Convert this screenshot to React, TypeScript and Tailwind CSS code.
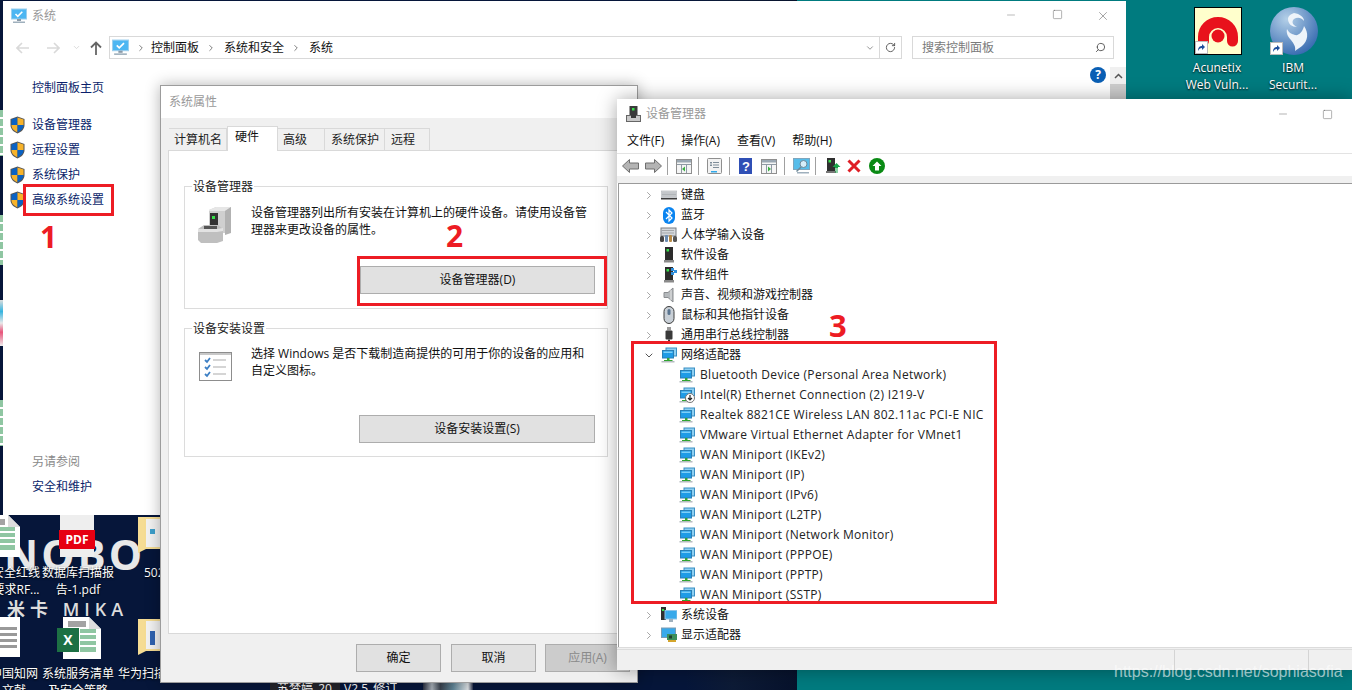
import type { ReactNode } from "react";
import { ChevronDown, ChevronRight, Minus, RotateCw, Search, Square, X } from "lucide-react";

const FONT = "font-['Open_Sans','Noto_Sans_CJK_SC',sans-serif]";

function Shield() {
  return (
    <svg width="15" height="18" viewBox="0 0 15 18" className="shrink-0">
      <path d="M7.5 .5 14.5 3v6c0 4-3 7-7 8.500C3.500 16 .5 13 .5 9V3z" fill="#555" />
      <path d="M7.500 1.500V9H1.500V3.600z" fill="#0a62c4" />
      <path d="M7.500 1.500V9h6V3.600z" fill="#f7b32b" />
      <path d="M1.500 9h6v7.300C4 15 1.500 12.500 1.500 9z" fill="#f7b32b" />
      <path d="M13.500 9h-6v7.300c3.500-1.300 6-3.800 6-7.300z" fill="#0a62c4" />
    </svg>
  );
}

function MonitorIcon({ size = 16 }: { size?: number }) {
  return (
    <svg width={size} height={size} viewBox="0 0 16 16" className="shrink-0">
      <rect x=".5" y="1" width="15" height="10" fill="#4db6f2" stroke="#9ccfee" />
      <path d="m4.500 6 2.300 2.300 4.500-4.500" fill="none" stroke="#fff" strokeWidth="1.600" />
      <rect x="6" y="11" width="4" height="2" fill="#8a9aa8" />
      <rect x="2" y="13.500" width="12" height="1.500" fill="#9fb0bd" />
    </svg>
  );
}

function NetIcon({ badge = false }: { badge?: boolean }) {
  return (
    <svg width="16" height="16" viewBox="0 0 16 16" className="shrink-0">
      <rect x="5" y="1" width="10.500" height="8" fill="#8ed0f2" stroke="#3a8fc4" />
      <rect x="1.500" y="3.500" width="11" height="7.500" fill="#1f9be6" stroke="#2a7fb5" />
      <rect x="2.500" y="4.500" width="9" height="1.500" fill="#7fd0f8" />
      <rect x="6" y="11" width="2.500" height="2" fill="#39a63a" />
      <rect x="3" y="13" width="8.500" height="1" fill="#2fa52f" />
      <rect x=".5" y="14" width="13" height="1.500" fill="#b5bcc0" />
      {badge ? (
        <>
          <circle cx="11" cy="11" r="4.500" fill="#fff" stroke="#777" />
          <path d="M11 8v5m-2-2 2 2 2-2" fill="none" stroke="#222" strokeWidth="1.200" />
        </>
      ) : null}
    </svg>
  );
}

function KeyboardIcon() {
  return (
    <svg width="16" height="16" viewBox="0 0 16 16" className="shrink-0">
      <rect x="0" y="4" width="16" height="7" fill="#d6d9dc" stroke="#a8acb0" strokeWidth=".6" />
      <path d="M1.500 6h13M1.500 7.500h13M1.500 9h13" stroke="#8c9094" strokeDasharray="1 1" />
      <rect x="0" y="11" width="16" height="1.500" fill="#3c3c3c" />
    </svg>
  );
}

function BluetoothIcon() {
  return (
    <svg width="16" height="17" viewBox="0 0 16 17" className="shrink-0">
      <rect x="2" y="0" width="12" height="17" rx="6" fill="#0a84f0" />
      <path d="m5 5 6 6-3 3V3l3 3-6 6" fill="none" stroke="#fff" strokeWidth="1.200" />
    </svg>
  );
}

function HidIcon() {
  return (
    <svg width="17" height="16" viewBox="0 0 17 16" className="shrink-0">
      <rect x="1" y="1" width="15" height="8" fill="#d4d8dc" stroke="#7b7f84" />
      <path d="M2.500 3.500h12M2.500 6h12" stroke="#777" strokeDasharray="1 1" />
      <rect x="0" y="9" width="4" height="6" rx="1.500" fill="#444" />
      <rect x="5" y="8" width="3" height="7" rx="1" fill="#6a8bb0" />
      <rect x="9" y="8" width="3" height="7" rx="1" fill="#b88a45" />
      <rect x="13" y="9" width="4" height="6" rx="1.500" fill="#555" />
    </svg>
  );
}

function TowerIcon({ extra = false }: { extra?: boolean }) {
  return (
    <svg width="16" height="16" viewBox="0 0 16 16" className="shrink-0">
      <rect x="4" y="0" width="8" height="13" fill="#2c2c2c" />
      <rect x="5.500" y="2" width="2.500" height="2.500" fill="#37e04a" />
      <rect x="3" y="13" width="10" height="2.500" fill="#8a8a8a" />
      {extra ? (
        <>
          <rect x="10" y="1" width="3" height="3" fill="#2f8fdc" />
          <rect x="13" y="3" width="3" height="3" fill="#2f8fdc" />
          <rect x="10" y="5" width="3" height="3" fill="#2f8fdc" />
        </>
      ) : null}
    </svg>
  );
}

function SoundIcon() {
  return (
    <svg width="16" height="16" viewBox="0 0 16 16" className="shrink-0">
      <path d="M3 5.500h4L12 1v14L7 10.500H3z" fill="#b5b9bc" stroke="#8a8d90" />
      <path d="M10 3v10" stroke="#e5e5e5" />
    </svg>
  );
}

function MouseIcon() {
  return (
    <svg width="16" height="18" viewBox="0 0 16 18" className="shrink-0">
      <rect x="3" y=".5" width="10" height="17" rx="5" fill="#c8cfd6" stroke="#3c3c3c" />
      <rect x="6.500" y="3" width="3" height="6" rx="1.500" fill="#5a7590" />
    </svg>
  );
}

function UsbIcon() {
  return (
    <svg width="16" height="16" viewBox="0 0 16 16" className="shrink-0">
      <rect x="6" y="0" width="4" height="3.500" fill="#9a9a9a" />
      <rect x="4.500" y="3.500" width="7" height="9" rx="1" fill="#3a3a3a" />
      <rect x="7" y="12.500" width="2" height="3.500" fill="#3a3a3a" />
    </svg>
  );
}

function SystemDeviceIcon() {
  return (
    <svg width="16" height="16" viewBox="0 0 16 16" className="shrink-0">
      <rect x="0" y="0" width="5" height="13" fill="#2f2f2f" />
      <rect x="1" y="2" width="2" height="2" fill="#37e04a" />
      <rect x="4" y="3.500" width="12" height="8.500" fill="#38a9ea" stroke="#8cc4e8" />
      <rect x="8" y="12" width="4" height="3" fill="#9fb0bd" />
    </svg>
  );
}

function DisplayIcon() {
  return (
    <svg width="16" height="16" viewBox="0 0 16 16" className="shrink-0">
      <rect x=".5" y="1" width="14" height="9.500" fill="#38a9ea" stroke="#7a9cb4" />
      <rect x="6" y="7" width="10" height="6" fill="#3c8f5a" />
      <rect x="8" y="8.500" width="3" height="3" fill="#1f3f2c" />
      <rect x="7" y="13" width="8" height="2" fill="#d4a52c" />
    </svg>
  );
}

function DeviceManagerIcon() {
  return (
    <svg width="15" height="16" viewBox="0 0 15 16" className="shrink-0">
      <rect x="3.500" y="0" width="8" height="10" fill="#3a3a3a" />
      <rect x="6" y="2" width="2.500" height="2.500" fill="#37e04a" />
      <rect x=".5" y="9.500" width="14" height="6" fill="#c9c9c9" stroke="#666" />
      <rect x="5" y="9" width="5" height="3" fill="#3a3a3a" />
    </svg>
  );
}

function ArrowButton({ flip = false }: { flip?: boolean }) {
  return (
    <svg width="17" height="14" viewBox="0 0 17 14" className={flip ? "shrink-0 -scale-x-100" : "shrink-0"}>
      <path d="M.5 7 7.500 .5V4h9v6h-9v3.500z" fill="#b4b4b4" stroke="#6f6f6f" />
    </svg>
  );
}

function ConsolePaneIcon({ flip = false }: { flip?: boolean }) {
  return (
    <svg width="16" height="15" viewBox="0 0 16 15" className="shrink-0">
      <rect x=".5" y=".5" width="15" height="14" fill="#f5f5f5" stroke="#8f8f8f" />
      <rect x="1" y="1" width="14" height="2.500" fill="#9aa7b2" />
      <path d="M1 5.500h14M5.500 5.500V14M10.500 5.500V14" stroke="#8f9aa4" />
      <path d={flip ? "M7 7.500v5l3-2.500z" : "M9 7.500v5L6 10z"} fill="#3cb043" />
    </svg>
  );
}

function SheetIcon() {
  return (
    <svg width="15" height="16" viewBox="0 0 15 16" className="shrink-0">
      <rect x=".5" y=".5" width="14" height="15" rx="1" fill="#f2f2f2" stroke="#8f8f8f" />
      <path d="M6 4.500h6M6 7h6M6 9.500h6" stroke="#7f8d99" />
      <rect x="3" y="4" width="2" height="1.500" fill="#7f8d99" />
      <rect x="3" y="6.500" width="2" height="1.500" fill="#7f8d99" />
      <rect x="4" y="13" width="6" height="1.500" fill="#31a8e8" />
    </svg>
  );
}

function HelpSquareIcon() {
  return (
    <svg width="13" height="16" viewBox="0 0 13 16" className="shrink-0">
      <rect width="13" height="16" fill="#2f4fb5" />
      <text x="3" y="13" fontSize="13" fontWeight="700" fill="#fff" fontFamily="Liberation Sans">?</text>
    </svg>
  );
}

function ScanIcon() {
  return (
    <svg width="17" height="16" viewBox="0 0 17 16" className="shrink-0">
      <rect x=".5" y=".5" width="16" height="11" fill="#57bdea" stroke="#7fa6bd" />
      <circle cx="10.500" cy="6" r="3.500" fill="#d6eefa" stroke="#6d8797" />
      <path d="M8 9 3.500 13.500" stroke="#6d8797" strokeWidth="1.500" />
      <rect x="4" y="14" width="12" height="1.500" fill="#9fb0bd" />
    </svg>
  );
}

function InstallIcon() {
  return (
    <svg width="16" height="16" viewBox="0 0 16 16" className="shrink-0">
      <rect x="2" y="0" width="8" height="13" fill="#2f2f2f" />
      <rect x="3.500" y="2" width="2.500" height="2.500" fill="#37e04a" />
      <rect x="1" y="13" width="10" height="2" fill="#777" />
      <path d="m11.500 5 4 4h-2.500v1.500h-3V9H7.500z" fill="#1aa64a" />
      <path d="M10 12h3M10 14h3" stroke="#1aa64a" strokeWidth="1.200" />
    </svg>
  );
}

function RedX() {
  return (
    <svg width="14" height="14" viewBox="0 0 14 14" className="shrink-0">
      <path d="m1.500 1.500 11 11m0-11-11 11" stroke="#df1f26" strokeWidth="3" />
    </svg>
  );
}

function UpCircle() {
  return (
    <svg width="16" height="16" viewBox="0 0 16 16" className="shrink-0">
      <circle cx="8" cy="8" r="8" fill="#0a8a14" />
      <path d="M8 3.500 12.500 8H10v4.500H6V8H3.500z" fill="#fff" />
    </svg>
  );
}

function ToolbarSep({ className }: { className: string }) {
  return <div className={`h-[18px] w-px shrink-0 bg-[#a0a0a0] ${className}`} />;
}

const TOP_ROWS: [string, ReactNode][] = [
  ["键盘", <KeyboardIcon />],
  ["蓝牙", <BluetoothIcon />],
  ["人体学输入设备", <HidIcon />],
  ["软件设备", <TowerIcon />],
  ["软件组件", <TowerIcon extra />],
  ["声音、视频和游戏控制器", <SoundIcon />],
  ["鼠标和其他指针设备", <MouseIcon />],
  ["通用串行总线控制器", <UsbIcon />],
];

const ADAPTERS = [
  "Bluetooth Device (Personal Area Network)",
  "Intel(R) Ethernet Connection (2) I219-V",
  "Realtek 8821CE Wireless LAN 802.11ac PCI-E NIC",
  "VMware Virtual Ethernet Adapter for VMnet1",
  "WAN Miniport (IKEv2)",
  "WAN Miniport (IP)",
  "WAN Miniport (IPv6)",
  "WAN Miniport (L2TP)",
  "WAN Miniport (Network Monitor)",
  "WAN Miniport (PPPOE)",
  "WAN Miniport (PPTP)",
  "WAN Miniport (SSTP)",
];

function TreeRow({ label, icon, open = false }: { label: string; icon: ReactNode; open?: boolean }) {
  return (
    <div className="flex h-5 items-center pl-[24px]">
      <div className="flex w-[12px] justify-center">
        {open ? (
          <ChevronDown size={13} strokeWidth={2} className="text-[#555]" />
        ) : (
          <ChevronRight size={13} strokeWidth={2} className="text-[#a6a6a6]" />
        )}
      </div>
      <div className="ml-[5px] flex w-[17px] justify-center">{icon}</div>
      <span className="ml-[4px] whitespace-nowrap text-[#111]">{label}</span>
    </div>
  );
}

function DeviceManagerWindow() {
  return (
    <div className="absolute left-[617px] top-[99px] flex h-[571px] w-[735px] flex-col bg-white shadow-[0_0_18px_rgba(0,0,0,0.35)]">
      <div className="flex h-[30px] shrink-0 items-center whitespace-nowrap pl-[9px] text-[#999]">
        <DeviceManagerIcon />
        <span className="ml-[5px] w-[631px]">设备管理器</span>
        <Minus size={12} strokeWidth={1} className="shrink-0 text-[#666]" />
        <Square size={11} strokeWidth={1} className="ml-[33px] shrink-0 text-[#555]" />
      </div>
      <div className="flex h-[24px] shrink-0 items-center gap-[17px] whitespace-nowrap pl-[10px] text-[#111]">
        <span>文件(F)</span>
        <span>操作(A)</span>
        <span>查看(V)</span>
        <span>帮助(H)</span>
      </div>
      <div className="flex h-[23px] shrink-0 items-center border-t border-[#e3e3e3] pl-[5px] pt-[2px]">
        <ArrowButton />
        <div className="ml-[6px]">
          <ArrowButton flip />
        </div>
        <ToolbarSep className="ml-[5px] mr-[8px]" />
        <ConsolePaneIcon />
        <ToolbarSep className="ml-[6px] mr-[8px]" />
        <SheetIcon />
        <ToolbarSep className="ml-[7px] mr-[9px]" />
        <HelpSquareIcon />
        <div className="ml-[9px]">
          <ConsolePaneIcon flip />
        </div>
        <ToolbarSep className="ml-[7px] mr-[8px]" />
        <ScanIcon />
        <ToolbarSep className="ml-[5px] mr-[9px]" />
        <InstallIcon />
        <div className="ml-[6px]">
          <RedX />
        </div>
        <div className="ml-[8px]">
          <UpCircle />
        </div>
      </div>
      <div className="h-[7px] shrink-0 bg-[#f0f0f0]" />
      <div className="ml-px flex-1 overflow-hidden border-l border-t border-[#9a9a9a] pt-[1px]">
        {TOP_ROWS.map(([label, icon]) => (
          <TreeRow key={label} label={label} icon={icon} />
        ))}
        <TreeRow label="网络适配器" icon={<NetIcon />} open />
        {ADAPTERS.map((name, i) => (
          <div key={name} className="flex h-5 items-center whitespace-nowrap pl-[60px] tracking-[0.3px] text-[#222]">
            <NetIcon badge={i === 1} />
            <span className="ml-[5px]">{name}</span>
          </div>
        ))}
        <TreeRow label="系统设备" icon={<SystemDeviceIcon />} />
        <TreeRow label="显示适配器" icon={<DisplayIcon />} />
      </div>
      <div className="flex h-[23px] shrink-0 border-t-[3px] border-double border-[#dcdcdc] bg-[#f0f0f0]">
        <div className="ml-[557px] h-full w-px bg-[#d4d4d4]" />
        <div className="ml-[133px] h-full w-px bg-[#d4d4d4]" />
      </div>
    </div>
  );
}

function GrayButton({ children, className }: { children: ReactNode; className: string }) {
  return (
    <div className={`flex h-[28px] items-center justify-center border border-[#adadad] bg-[#e1e1e1] text-[#111] ${className}`}>
      {children}
    </div>
  );
}

function GroupBox({ title, className, children }: { title: string; className: string; children: ReactNode }) {
  return (
    <div className={`relative border border-[#dcdcdc] ${className}`}>
      <span className="absolute -top-[8px] left-[7px] bg-white px-[1px] leading-4 text-[#222]">{title}</span>
      {children}
    </div>
  );
}

function SystemPropertiesDialog() {
  const tabs = [
    ["计算机名", "w-[58px] pl-[5px]"],
    ["硬件", "w-[51px] pl-[7px]"],
    ["高级", "w-[47px] pl-[5px]"],
    ["系统保护", "w-[60px] pl-[6px]"],
    ["远程", "w-[45px] pl-[6px]"],
  ];
  return (
    <div className="absolute left-[160px] top-[85px] flex h-[598px] w-[478px] flex-col border border-[#9c9c9c] bg-[#f0f0f0] shadow-[0_0_14px_rgba(0,0,0,0.3)]">
      <div className="flex h-[32px] shrink-0 items-center bg-white pl-[8px] text-[#999]">系统属性</div>
      <div className="flex h-[32px] shrink-0 items-end pl-[8px]">
        {tabs.map(([label, width]) =>
          label === "硬件" ? (
            <div
              key={label}
              className={`relative z-10 -mb-px flex h-[25px] items-start border-x border-t border-[#d9d9d9] bg-white pt-[2px] text-[#111] ${width}`}
            >
              {label}
            </div>
          ) : (
            <div
              key={label}
              className={`flex h-[22px] items-center border-r border-t border-[#d9d9d9] bg-[#f0f0f0] pt-[1px] text-[#222] ${width}`}
            >
              {label}
            </div>
          ),
        )}
      </div>
      <div className="ml-[7px] mr-[6px] h-[484px] shrink-0 border border-[#d9d9d9] bg-white px-[15px] pt-[35px]">
        <GroupBox title="设备管理器" className="h-[123px] w-[424px]">
          <div className="flex pl-[13px] pt-[20px]">
            <svg width="35" height="36" viewBox="0 0 35 36" className="shrink-0">
              <path d="M11 3 18 0h15v26H19l-8-4z" fill="#cfcfcf" />
              <path d="M11 3 18 0h15l-6 4H11z" fill="#e6e6e6" />
              <path d="M27 4 33 0v26l-6 2z" fill="#b2b2b2" />
              <path d="M12 6h8v13h-8z" fill="#333" />
              <rect x="14" y="9" width="3" height="3" fill="#37e04a" />
              <path d="M0 22l6-4h14l5 4v12l-6 2H3l-3-3z" fill="#bfbfbf" />
              <path d="M0 22h19l6-1v3l-6 1H0z" fill="#e2e2e2" />
              <path d="M6 19h13v3H6z" fill="#555" />
            </svg>
            <p className="-mt-[3px] ml-[18px] w-[345px] leading-[17px] text-[#111]">
              设备管理器列出所有安装在计算机上的硬件设备。请使用设备管理器来更改设备的属性。
            </p>
          </div>
          <div className="flex justify-end pr-[12px] pt-[23px]">
            <GrayButton className="w-[235px]">设备管理器(D)</GrayButton>
          </div>
        </GroupBox>
        <GroupBox title="设备安装设置" className="mt-[19px] h-[129px] w-[424px]">
          <div className="flex pl-[14px] pt-[23px]">
            <svg width="33" height="29" viewBox="0 0 33 29" className="shrink-0">
              <rect x=".5" y=".5" width="32" height="28" fill="#fff" stroke="#8d8d8d" />
              <rect x="1" y="1" width="31" height="2" fill="#c8c8c8" />
              <path d="M14 8h13M14 15h13M14 22h13" stroke="#c8c8c8" strokeWidth="1.500" />
              <path d="m6 8 2 2 3-4M6 15l2 2 3-4M6 22l2 2 3-4" fill="none" stroke="#3d7fc4" strokeWidth="1.800" />
            </svg>
            <p className="-mt-[7px] ml-[19px] h-[34px] w-[345px] leading-[17px] text-[#111]">
              选择 Windows 是否下载制造商提供的可用于你的设备的应用和自定义图标。
            </p>
          </div>
          <div className="flex justify-end pr-[12px] pt-[34px]">
            <GrayButton className="w-[236px]">设备安装设置(S)</GrayButton>
          </div>
        </GroupBox>
      </div>
      <div className="flex gap-[10px] pl-[195px] pt-[10px]">
        <GrayButton className="w-[85px]">确定</GrayButton>
        <GrayButton className="w-[85px]">取消</GrayButton>
        <GrayButton className="-ml-px w-[85px] !bg-[#cccccc] !text-[#8a8a8a]">应用(A)</GrayButton>
      </div>
    </div>
  );
}

function NavLink({ label }: { label: string }) {
  return (
    <div className="flex h-[25px] items-center pl-[7px]">
      <Shield />
      <span className="ml-[7px] text-[#0b1f6b]">{label}</span>
    </div>
  );
}

function SystemWindow() {
  return (
    <div className="absolute left-[3px] top-[1px] flex h-[514px] w-[1123px] flex-col bg-white">
      <div className="flex h-[30px] shrink-0 items-center pl-[8px] text-[#999]">
        <MonitorIcon />
        <span className="ml-[5px]">系统</span>
        <div className="ml-auto flex">
          <div className="flex w-[46px] justify-center"><Minus size={12} strokeWidth={1} className="text-[#777]" /></div>
          <div className="flex w-[46px] justify-center"><Square size={11} strokeWidth={1} className="text-[#555]" /></div>
          <div className="flex w-[46px] justify-center"><X size={14} strokeWidth={1} className="text-[#666]" /></div>
        </div>
      </div>
      <div className="mt-[5px] flex h-[23px] shrink-0 items-center">
        <svg width="14" height="12" viewBox="0 0 14 12" className="ml-[13px] shrink-0">
          <path d="M6 1 1 6l5 5M1 6h12" fill="none" stroke="#d9d9d9" strokeWidth="1.600" />
        </svg>
        <svg width="14" height="12" viewBox="0 0 14 12" className="ml-[16px] -scale-x-100 shrink-0">
          <path d="M6 1 1 6l5 5M1 6h12" fill="none" stroke="#d9d9d9" strokeWidth="1.600" />
        </svg>
        <ChevronDown size={9} className="ml-[12px] text-[#d0d0d0]" />
        <svg width="12" height="14" viewBox="0 0 12 14" className="ml-[9px] shrink-0">
          <path d="M1 6.500 6 1.500l5 5M6 1.500V14" fill="none" stroke="#666" strokeWidth="1.800" />
        </svg>
        <div className="ml-[7px] flex h-[23px] w-[771px] items-center border border-[#d9d9d9] pl-[2px] text-[#111]">
          <MonitorIcon size={17} />
          <ChevronRight size={10} strokeWidth={2} className="ml-[7px] text-[#666]" />
          <span className="ml-[5px]">控制面板</span>
          <ChevronRight size={10} strokeWidth={2} className="ml-[7px] text-[#666]" />
          <span className="ml-[8px]">系统和安全</span>
          <ChevronRight size={10} strokeWidth={2} className="ml-[7px] text-[#666]" />
          <span className="ml-[8px]">系统</span>
          <ChevronDown size={10} strokeWidth={1.500} className="ml-auto mr-[4px] text-[#555]" />
        </div>
        <div className="flex h-[23px] w-[22px] items-center justify-center border-y border-r border-[#d9d9d9]">
          <RotateCw size={11} className="text-[#555]" />
        </div>
        <div className="ml-[10px] flex h-[23px] w-[202px] items-center justify-between border border-[#d9d9d9] pl-[9px] pr-[7px] text-[#7a7a7a]">
          <span>搜索控制面板</span>
          <Search size={11} strokeWidth={2} className="-scale-x-100 text-[#555]" />
        </div>
      </div>
      <div className="flex min-h-0 flex-1">
        <div className="w-[157px] pt-[21px]">
          <div className="pl-[29px] leading-4 text-[#0b1f6b]">控制面板主页</div>
          <div className="mt-[16px]">
            {["设备管理器", "远程设置", "系统保护", "高级系统设置"].map((label) => (
              <NavLink key={label} label={label} />
            ))}
          </div>
          <div className="mt-[242px] pl-[29px] text-[#8a8a8a]">另请参阅</div>
          <div className="mt-[9px] pl-[29px] text-[#0b1f6b]">安全和维护</div>
        </div>
        <div className="flex flex-1 justify-end pt-[8px]">
          <div className="mr-[4px] flex h-[16px] w-[16px] items-center justify-center rounded-full bg-[#0a5fb4] text-[12px] font-bold leading-none text-white">?</div>
          <div className="flex w-[16px] flex-col">
            <div className="flex h-[17px] items-center justify-center bg-[#f0f0f0]">
              <svg width="9" height="6" viewBox="0 0 9 6"><path d="m1 5 3.500-3.500L8 5" fill="none" stroke="#555" strokeWidth="1.500" /></svg>
            </div>
            <div className="flex-1 bg-[#cdcdcd]" />
          </div>
        </div>
      </div>
    </div>
  );
}

function ShortcutBadge() {
  return (
    <div className="absolute bottom-0 left-0 flex h-[13px] w-[13px] items-center justify-center border border-[#bbb] bg-white">
      <svg width="9" height="9" viewBox="0 0 9 9"><path d="M1 8C1 4 3 3 5 3V1l3 3-3 3V5C3 5 2 6 1 8z" fill="#1e4f9c" /></svg>
    </div>
  );
}

function DesktopLabel({ className, lines }: { className: string; lines: string[] }) {
  return (
    <div className={`absolute whitespace-nowrap text-center leading-[17px] text-white [text-shadow:0_1px_2px_#000] ${className}`}>
      {lines.map((line) => (
        <div key={line}>{line}</div>
      ))}
    </div>
  );
}

function GridSheet() {
  return (
    <svg width="38" height="42" viewBox="0 0 38 42">
      <path d="M0 0h26l12 12v30H0z" fill="#fff" />
      <path d="M26 0v12h12" fill="#ddd" />
      <rect x="5" y="4" width="18" height="6" fill="#a3a3a3" />
      <path d="M5 12h28v4H5zM5 18h28v4H5zM5 24h28v4H5zM5 30h28v5H5z" fill="#8fc6a2" />
      <path d="M15 12v23h2V12z" fill="#fff" />
    </svg>
  );
}

function FolderIcon({ blue = false }: { blue?: boolean }) {
  return (
    <svg width="24" height="42" viewBox="0 0 24 42">
      <path d="M0 2h24v32H8l-8 4z" fill="#f5dc93" />
      <rect x="8" y="4" width="16" height="28" fill="#f2f2f2" />
      <rect x="12" y="14" width="5" height={blue ? 14 : 5} fill={blue ? "#2f62b0" : "#3ea0cc"} />
    </svg>
  );
}

function Desktop() {
  return (
    <>
      <div className="absolute left-0 top-0 h-[690px] w-[797px] bg-[linear-gradient(90deg,#06163a_0%,#06163a_86%,#0d1b36_92%,#07122c_100%)]">
        <div className="absolute left-0 top-[110px] h-[46px] w-[3px] bg-[repeating-linear-gradient(#8fc6a2_0_7px,#fff_7px_9px)]" />
        <div className="absolute left-0 top-[215px] h-[50px] w-[3px] bg-[repeating-linear-gradient(#8fc6a2_0_7px,#fff_7px_9px)]" />
        <div className="absolute left-0 top-[300px] h-[46px] w-[3px] bg-[linear-gradient(#ddd,#35b4e0_25%,#e9e9e9_50%,#e8537a_70%,#eee)]" />
        <div className="absolute left-0 top-[400px] h-[46px] w-[3px] bg-[repeating-linear-gradient(#8fc6a2_0_7px,#fff_7px_9px)]" />
        <span className="absolute left-[4px] top-[524px] text-[42px] font-bold leading-[60px] tracking-[3px] text-[#e8e8e8]">NOBO</span>
        <span className="absolute left-[7px] top-[597px] whitespace-nowrap text-[18px] font-semibold leading-6 tracking-[5px] text-[#dcdcdc]">米卡 MIKA</span>
      </div>
      <div className="absolute -left-[18px] top-[515px]"><GridSheet /></div>
      <div className="absolute left-[60px] top-[515px] h-[42px] w-[34px] bg-[#eee]">
        <div className="-ml-[1px] mt-[15px] flex h-[19px] w-[36px] items-center justify-center bg-[#e60012] text-[12px] font-bold text-white">PDF</div>
      </div>
      <div className="absolute left-[138px] top-[515px]"><FolderIcon /></div>
      <DesktopLabel className="-left-[12px] top-[564px] w-[56px]" lines={["安全红线", "要求RF..."]} />
      <DesktopLabel className="left-[42px] top-[564px]" lines={["数据库扫描报", "告-1.pdf"]} />
      <DesktopLabel className="left-[144px] top-[564px]" lines={["502"]} />
      <div className="absolute -left-[18px] top-[617px] h-[40px] w-[38px] bg-white">
        <div className="mx-[3px] mt-[10px] h-[24px] bg-[repeating-linear-gradient(#999_0_3px,#fff_3px_6px)]" />
      </div>
      <div className="absolute left-[63px] top-[617px]"><GridSheet /></div>
      <div className="absolute left-[57px] top-[628px] flex h-[24px] w-[22px] items-center justify-center bg-[#1d7044] text-[14px] font-bold text-white">X</div>
      <div className="absolute left-[138px] top-[617px]"><FolderIcon blue /></div>
      <DesktopLabel className="-left-[10px] top-[665px]" lines={["中国知网", "文献"]} />
      <DesktopLabel className="left-[42px] top-[665px]" lines={["系统服务清单", "及安全策略"]} />
      <DesktopLabel className="left-[118px] top-[665px]" lines={["华为扫描"]} />
      <div className="absolute left-[270px] top-[683px] h-[7px] w-[70px] bg-[#23232a]" />
      <span className="absolute left-[277px] top-[681px] whitespace-nowrap text-white">苏梦婷_20</span>
      <span className="absolute left-[344px] top-[681px] whitespace-nowrap text-white">V2.5_修订</span>
      <div className="absolute left-[423px] top-[683px] h-[7px] w-[50px] bg-[linear-gradient(90deg,#2a3040,#a8b0b8_18%,#39424e_35%,#5f8597_60%,#dfe3e6_90%,#27304a)]" />

      <div className="absolute left-[1194px] top-[7px] h-[48px] w-[48px] border border-black bg-[#ffffcc]">
        <svg width="46" height="46" viewBox="0 0 46 46" className="absolute inset-0">
          <path d="M8.500 33V29a14.500 14.500 0 0 1 29 0v4" fill="none" stroke="#e8121c" strokeWidth="11" strokeLinecap="round" />
          <circle cx="23" cy="28" r="6.500" fill="#e8121c" />
        </svg>
        <ShortcutBadge />
      </div>
      <div className="absolute left-[1270px] top-[7px] h-[48px] w-[48px] rounded-full bg-[radial-gradient(circle_at_35%_25%,#b4d0e8,#2f64ad_85%)]">
        <svg width="48" height="48" viewBox="0 0 48 48" className="absolute inset-0">
          <path d="M24 6c6 1 10 4 10 8-3-4-7-4-10-2-3 3-1 6 3 8-5 0-9-3-9-8 0-3 3-5 6-6z" fill="#eef4fa" />
          <path d="M34 19c5 7 4 15-2 20-2 2-5 3-7 5 1-4-1-7-4-11-3-3-5-7-4-11 2 4 5 5 8 6 4 1 8-4 9-9z" fill="#eef4fa" />
        </svg>
        <ShortcutBadge />
      </div>
      <DesktopLabel className="left-[1177px] top-[59px] w-[80px]" lines={["Acunetix", "Web Vuln..."]} />
      <DesktopLabel className="left-[1253px] top-[59px] w-[80px]" lines={["IBM", "Securit..."]} />
    </>
  );
}

function Annotations() {
  return (
    <>
      <div className="absolute left-[23px] top-[184px] h-[32px] w-[91px] border-[3px] border-[#ed1c24]" />
      <div className="absolute left-[357px] top-[256px] h-[50px] w-[250px] border-[3px] border-[#ed1c24]" />
      <div className="absolute left-[631px] top-[341px] h-[263px] w-[366px] border-[3px] border-[#ed1c24]" />
      <span className="absolute left-[40px] top-[217px] text-[30px] font-bold leading-10 text-[#ed1c24]">1</span>
      <span className="absolute left-[446px] top-[216px] text-[30px] font-bold leading-10 text-[#ed1c24]">2</span>
      <span className="absolute left-[829px] top-[305px] text-[31px] font-bold leading-10 text-[#ed1c24]">3</span>
      <span className="absolute left-[1114px] top-[662px] whitespace-nowrap font-['Liberation_Sans',sans-serif] text-[16px] leading-5 text-white/60">
        https://blog.csdn.net/sophiasofia
      </span>
    </>
  );
}

export default function App() {
  return (
    <div className={`relative h-[690px] w-[1352px] overflow-hidden bg-[#007b7f] text-[12px] leading-4 ${FONT}`}>
      <Desktop />
      <SystemWindow />
      <SystemPropertiesDialog />
      <DeviceManagerWindow />
      <Annotations />
    </div>
  );
}
